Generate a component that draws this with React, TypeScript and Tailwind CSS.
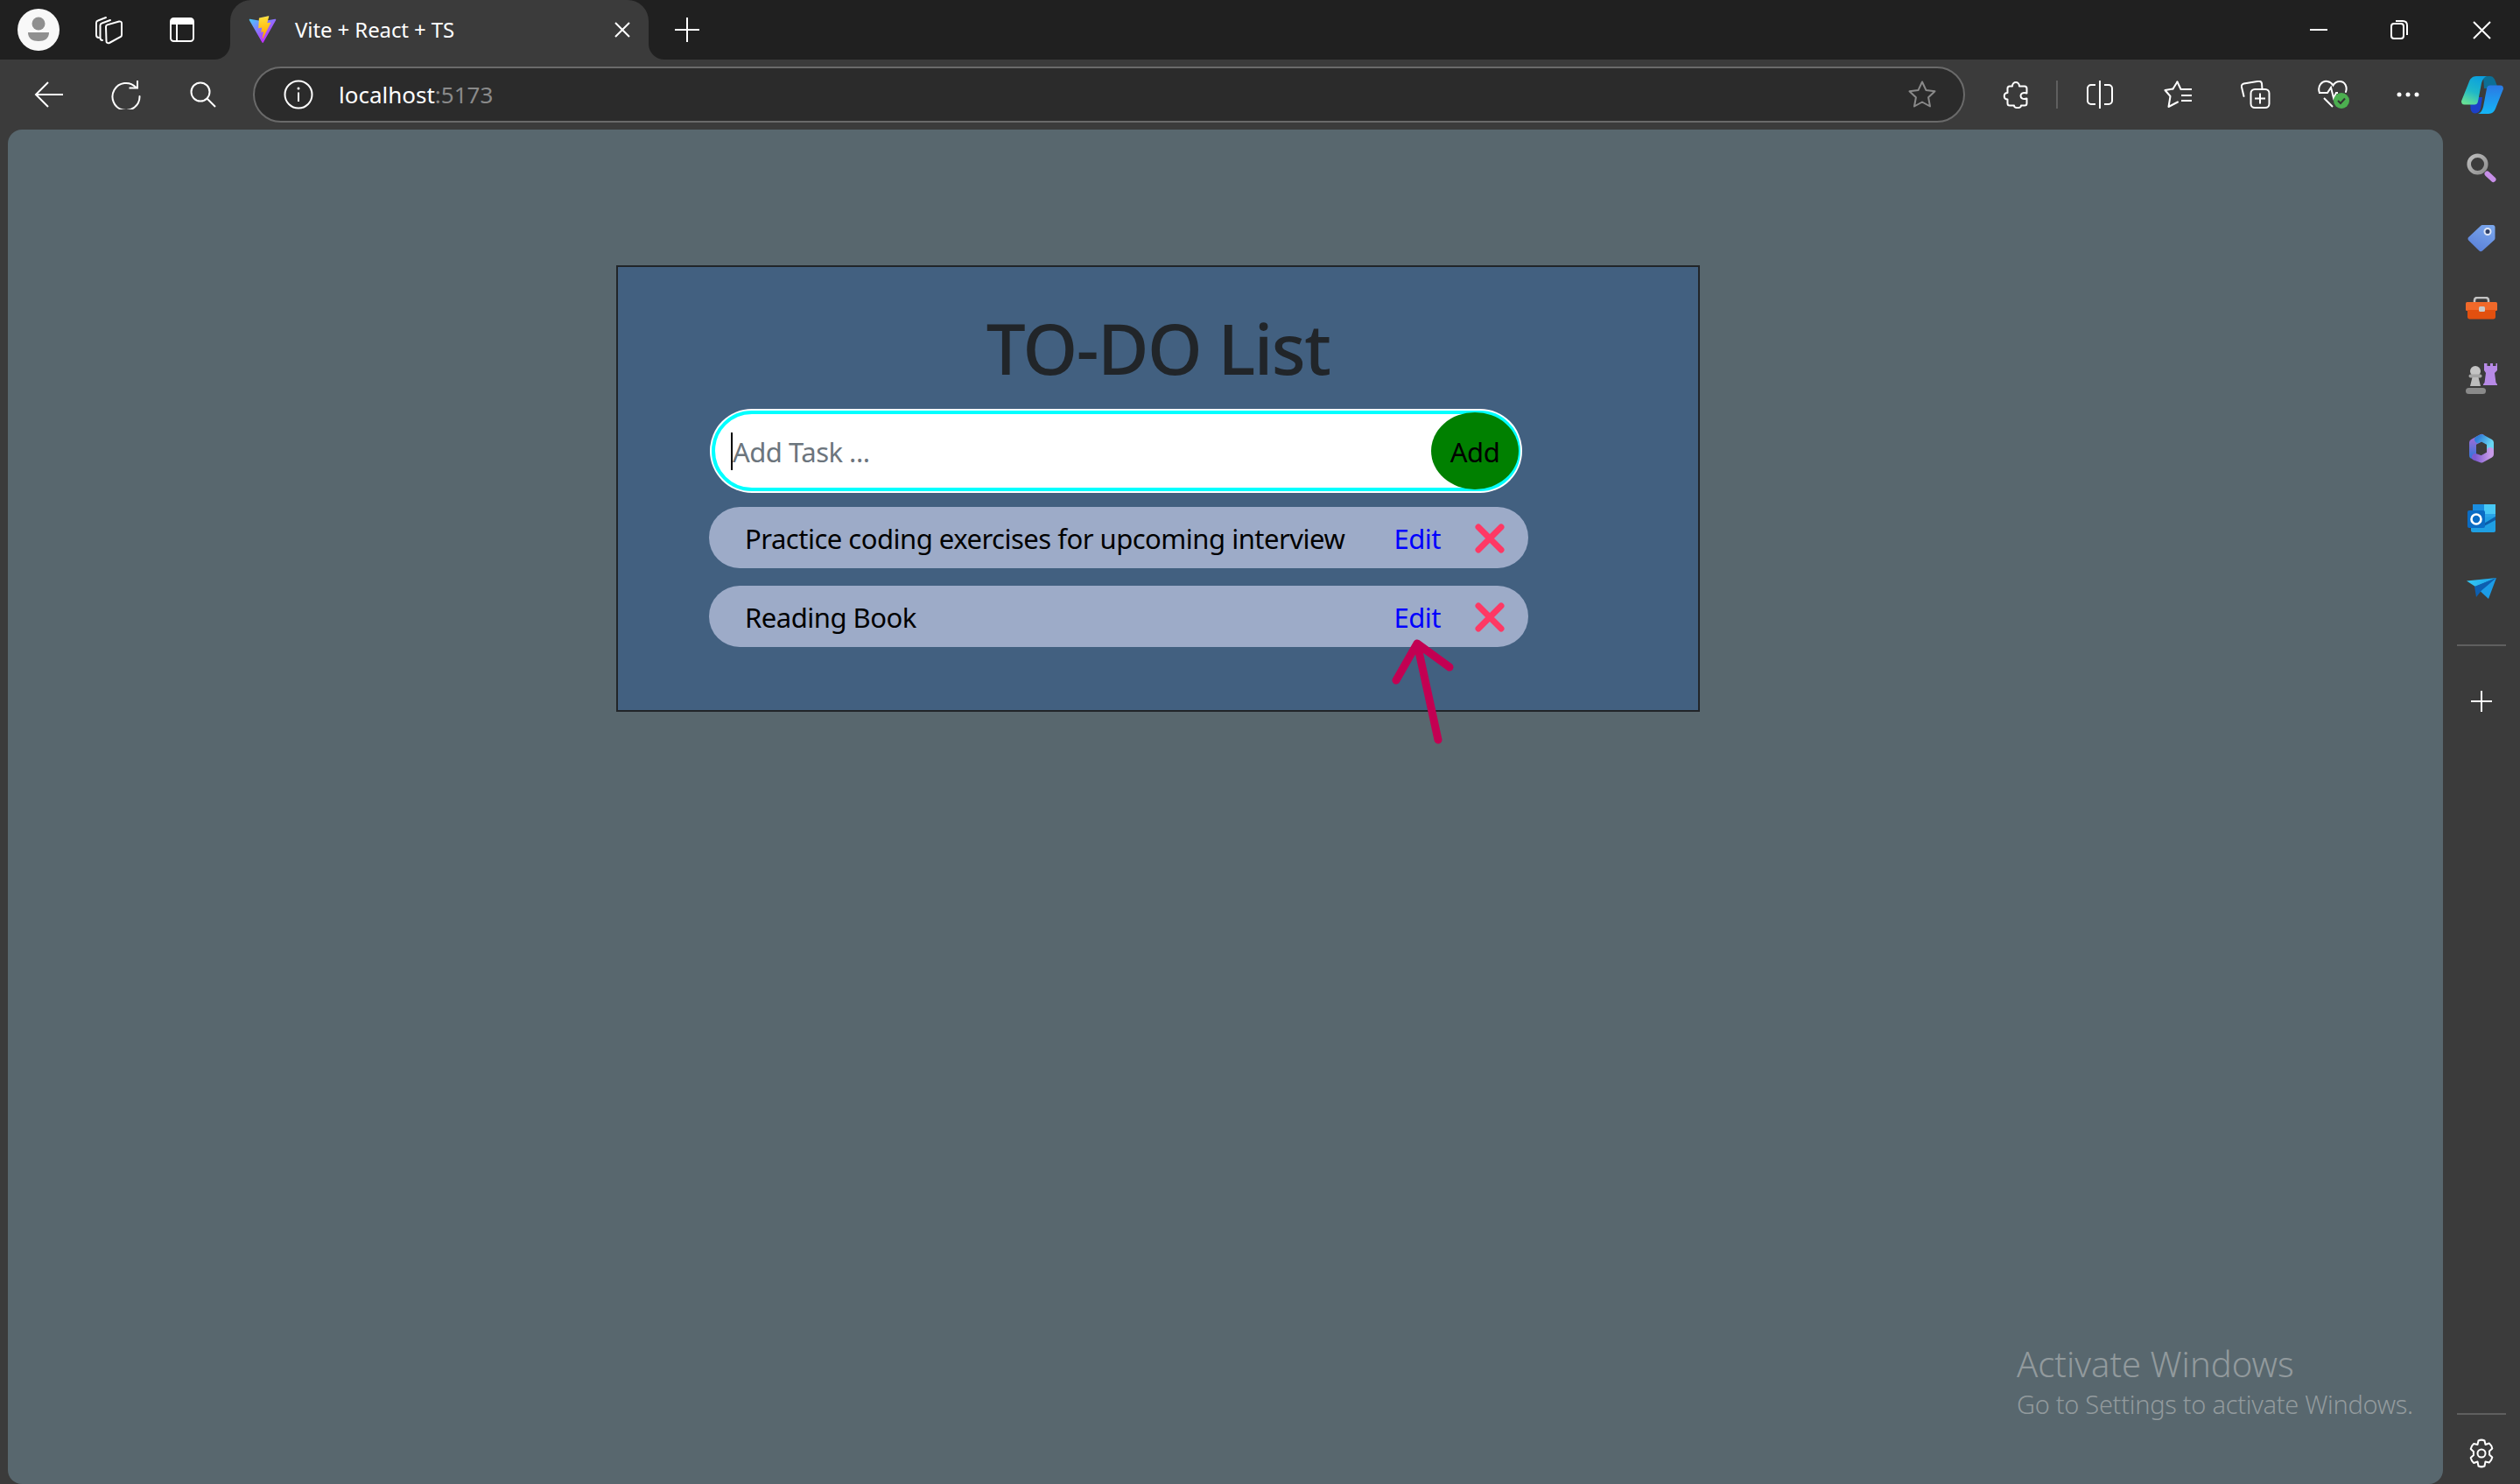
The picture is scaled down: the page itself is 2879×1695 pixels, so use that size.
import React from "react";

const W = "#ffffff";

function Svg({ w, h, children, className = "" }: { w: number; h: number; children: React.ReactNode; className?: string }) {
  return (
    <svg width={w} height={h} viewBox={`0 0 ${w} ${h}`} fill="none" className={"block shrink-0 " + className}>
      {children}
    </svg>
  );
}

function Slot({ w, children }: { w: string; children: React.ReactNode }) {
  return <div className={"flex h-full shrink-0 items-center justify-center " + w}>{children}</div>;
}

const Avatar = () => (
  <Svg w={48} h={48}>
    <circle cx="24" cy="24" r="24" fill="#f8f8f8" />
    <circle cx="24" cy="17" r="7.5" fill="#8f8f8f" />
    <path d="M12 27h24a0 0 0 0 1 0 0c0 7-5 10-12 10s-12-3-12-10z" fill="#8f8f8f" />
  </Svg>
);

const TabsIcon = () => (
  <Svg w={34} h={34}>
    <path d="M6 26c-2 0-3-1-3-3V9c0-1 .5-2 2-2.500L14 3" stroke={W} strokeWidth="2" strokeLinecap="round" />
    <path d="M10 29c-2 0-2.500-1-2.500-3V12c0-1 .5-2 2-2.500L19 6" stroke={W} strokeWidth="2" strokeLinecap="round" />
    <path d="M14 13.500c0-1 .5-1.800 1.500-2.100L29 7.500c1.500-.4 3 .4 3 2V23c0 1-.5 1.800-1.500 2.200L18 32c-2 .6-3.500-.2-3.500-2z" stroke={W} strokeWidth="2" strokeLinejoin="round" />
  </Svg>
);

const VTabsIcon = () => (
  <Svg w={28} h={28}>
    <rect x="1" y="1" width="26" height="26" rx="3.500" stroke={W} strokeWidth="2" />
    <path d="M1 8V4a3 3 0 0 1 3-3h20a3 3 0 0 1 3 3v4z" fill={W} />
    <path d="M8 8v19" stroke={W} strokeWidth="2" />
  </Svg>
);

const ViteIcon = () => (
  <svg width="32" height="32" viewBox="0 0 410 404" fill="none" className="block shrink-0">
    <path d="M399.641 59.5246L215.643 388.545C211.844 395.338 202.084 395.378 198.228 388.618L10.5817 59.5563C6.38087 52.1896 12.6802 43.2665 21.0281 44.7586L205.223 77.6824C206.398 77.8924 207.601 77.8904 208.776 77.6763L389.119 44.8058C397.439 43.2894 403.768 52.1434 399.641 59.5246Z" fill="url(#v0)" />
    <path d="M292.965 1.5744L156.801 28.2552C154.563 28.6937 152.906 30.5903 152.771 32.8664L144.395 174.33C144.198 177.662 147.258 180.248 150.51 179.498L188.42 170.749C191.967 169.931 195.172 173.055 194.443 176.622L183.18 231.775C182.422 235.487 185.907 238.661 189.532 237.56L212.947 230.446C216.577 229.344 220.065 232.527 219.297 236.242L201.398 322.875C200.278 328.294 207.486 331.249 210.492 326.603L212.5 323.5L323.454 102.072C325.312 98.3645 322.108 94.137 318.036 94.9228L279.014 102.454C275.347 103.161 272.227 99.746 273.262 96.1583L298.731 7.86689C299.767 4.27314 296.636 0.855181 292.965 1.5744Z" fill="url(#v1)" />
    <defs>
      <linearGradient id="v0" x1="6" y1="33" x2="235" y2="344" gradientUnits="userSpaceOnUse">
        <stop stopColor="#41D1FF" />
        <stop offset="1" stopColor="#BD34FE" />
      </linearGradient>
      <linearGradient id="v1" x1="194.651" y1="8.818" x2="236.076" y2="292.989" gradientUnits="userSpaceOnUse">
        <stop stopColor="#FFEA83" />
        <stop offset="0.083" stopColor="#FFDD35" />
        <stop offset="1" stopColor="#FFA800" />
      </linearGradient>
    </defs>
  </svg>
);

const XThin = ({ s = 20 }: { s?: number }) => (
  <Svg w={s} h={s}>
    <path d={`M1 1L${s - 1} ${s - 1}M${s - 1} 1L1 ${s - 1}`} stroke={W} strokeWidth="2" />
  </Svg>
);

const Plus = ({ s = 28 }: { s?: number }) => (
  <Svg w={s} h={s}>
    <path d={`M0 ${s / 2}H${s}M${s / 2} 0V${s}`} stroke={W} strokeWidth="2" />
  </Svg>
);

const Back = () => (
  <Svg w={34} h={30}>
    <path d="M33 15H2M16 1L2 15l14 14" stroke={W} strokeWidth="2" />
  </Svg>
);

const Reload = () => (
  <Svg w={34} h={34}>
    <path d="M28 8.500A15.500 15.500 0 1 0 32.500 19" stroke={W} strokeWidth="2" strokeLinecap="round" />
    <path d="M30 1v8.500h-9.500" stroke={W} strokeWidth="2" />
  </Svg>
);

const Search = () => (
  <Svg w={30} h={30}>
    <circle cx="12" cy="12" r="10.500" stroke={W} strokeWidth="2" />
    <path d="M19.500 19.500L29 29" stroke={W} strokeWidth="2" />
  </Svg>
);

const Info = () => (
  <Svg w={34} h={34}>
    <circle cx="17" cy="17" r="15.500" stroke={W} strokeWidth="2" />
    <path d="M17 14.500V25" stroke={W} strokeWidth="2" />
    <circle cx="17" cy="10" r="1.500" fill={W} />
  </Svg>
);

const StarOutline = () => (
  <Svg w={34} h={34}>
    <path d="M17 2.500l4.400 9.400 10.100 1.300-7.400 7.100 1.900 10.200L17 25.500l-9 5 1.900-10.200-7.400-7.100 10.100-1.300z" stroke="#8a8a8a" strokeWidth="2" strokeLinejoin="round" />
  </Svg>
);

const Puzzle = () => (
  <Svg w={30} h={32}>
    <path d="M11 6.500c0-6 8-6 8 0h6c1.500 0 2.500 1 2.500 2.500v5.500c-5-1.500-7 1-7 3s2 4.500 7 3V26c0 1.500-1 2.500-2.500 2.500h-4c0 3.500-8 3.500-8 0H8c-1.500 0-2.500-1-2.500-2.500v-4.500c-5 0-5-7.500 0-7.500V9c0-1.500 1-2.500 2.500-2.500z" stroke={W} strokeWidth="2" strokeLinejoin="round" />
  </Svg>
);

const SplitIcon = () => (
  <Svg w={30} h={32}>
    <path d="M10 5H5a4 4 0 0 0-4 4v14a4 4 0 0 0 4 4h5M20 5h5a4 4 0 0 1 4 4v14a4 4 0 0 1-4 4h-5" stroke={W} strokeWidth="2" />
    <path d="M15 0v32" stroke={W} strokeWidth="2" />
  </Svg>
);

const FavList = () => (
  <Svg w={32} h={32}>
    <path d="M15.500 1.500l4 8.500M10.500 9.500L1.500 11l6 7-2 12 10.500-5.500" stroke={W} strokeWidth="2" strokeLinejoin="round" strokeLinecap="round" />
    <path d="M15.500 1.500l-5 8" stroke={W} strokeWidth="2" strokeLinecap="round" />
    <path d="M20 10h12M20 17h12M20 23h12" stroke={W} strokeWidth="2" />
  </Svg>
);

const Collections = () => (
  <Svg w={34} h={32}>
    <path d="M3.500 18L1 7.500c-.5-2 .5-3.500 2.500-4L20 .8c2-.4 3.500.5 4 2.500L24.500 10" stroke={W} strokeWidth="2" strokeLinecap="round" />
    <rect x="11.500" y="10" width="21" height="21" rx="4.500" stroke={W} strokeWidth="2" />
    <path d="M22 14.500v12M16 20.500h12" stroke={W} strokeWidth="2" />
  </Svg>
);

const Health = () => (
  <Svg w={36} h={34}>
    <path d="M2 15C-1 7 5 1 11 2c3 .5 5 2 6.500 4.500C19 4 21.500 2 25 2c6 0 9 6 7 12" stroke={W} strokeWidth="2" strokeLinecap="round" />
    <path d="M1 15h10l4-6 3 12 3-6h2" stroke={W} strokeWidth="2" />
    <path d="M7 21l10 10" stroke={W} strokeWidth="2" />
    <circle cx="27" cy="24" r="9" fill="#4caf50" />
    <path d="M23 24l3 3 5-5.500" stroke="#333" strokeWidth="2" />
  </Svg>
);

const Dots = () => (
  <Svg w={26} h={6}>
    <circle cx="3" cy="3" r="2.500" fill={W} />
    <circle cx="13" cy="3" r="2.500" fill={W} />
    <circle cx="23" cy="3" r="2.500" fill={W} />
  </Svg>
);

const Copilot = () => (
  <Svg w={48} h={43}>
    <defs>
      <linearGradient id="c0" x1="0.700" y1="0" x2="0.300" y2="1">
        <stop offset="0" stopColor="#0a9fe0" />
        <stop offset="0.550" stopColor="#1fb8c8" />
        <stop offset="1" stopColor="#66e096" />
      </linearGradient>
      <linearGradient id="c1" x1="0.500" y1="0" x2="0.500" y2="1">
        <stop offset="0" stopColor="#2b78e4" />
        <stop offset="1" stopColor="#14b6f6" />
      </linearGradient>
    </defs>
    <path d="M25 0h8c3 0 5 3 6 6l3 8H26z" fill="#0c6f95" />
    <path d="M10 24h14l-2 13c-1 3-3 5.500-6 5.500-3 0-5-2-5.500-5z" fill="#1c40c8" />
    <path d="M9 6c1-3 4-6 8-6h12c-3 1-5 4-6 8l-4 21c-.5 2.500-2 3.500-4 3.500H3.500C1 32.500 0 31 0 28.500z" fill="url(#c0)" />
    <path d="M39 37c-1 3-4 6-8 6H19c3-1 5-4 6-8l4-21c.5-2.500 2-3.500 4-3.500h11.500C47 10.500 48 12 48 14.500z" fill="url(#c1)" />
  </Svg>
);

const SideSearch = () => (
  <Svg w={34} h={34}>
    <defs>
      <linearGradient id="s0" x1="0" y1="0" x2="1" y2="1">
        <stop offset="0" stopColor="#bdbdbd" />
        <stop offset="1" stopColor="#8f8f8f" />
      </linearGradient>
    </defs>
    <circle cx="12.500" cy="12.500" r="9.800" stroke="url(#s0)" strokeWidth="4.500" />
    <path d="M23.500 23.500l7 6.500" stroke="#c78fe8" strokeWidth="6" strokeLinecap="round" />
  </Svg>
);

const Tag = () => (
  <Svg w={32} h={32}>
    <defs>
      <linearGradient id="t0" x1="0.800" y1="0" x2="0.300" y2="1">
        <stop offset="0" stopColor="#7aa6ec" />
        <stop offset="1" stopColor="#5a80d8" />
      </linearGradient>
    </defs>
    <path d="M17 1h12c1.500 0 2.500 1 2.500 2.500V16c0 1-.3 1.700-1 2.300L17 30.500c-1.300 1-2.700 1-3.800-.2L1.200 18.500c-1-1.200-1-2.600.2-3.700L15 2c.6-.6 1.200-1 2-1z" fill="url(#t0)" />
    <circle cx="23" cy="8.500" r="3.500" fill="#2f3f66" stroke="#dfe6f5" strokeWidth="2" />
  </Svg>
);

const Toolbox = () => (
  <Svg w={36} h={26}>
    <path d="M10 9V4c0-2 1-3 3-3h10c2 0 3 1 3 3v5" stroke="#c4c4c4" strokeWidth="2.500" />
    <rect x="0" y="6" width="36" height="10" rx="1.500" fill="#f0692a" />
    <path d="M2 15h32v8c0 1.500-1 2.500-2.500 2.500h-27C3 25.500 2 24.500 2 23z" fill="#e2500f" />
    <rect x="15" y="11" width="7" height="6" rx="1.500" fill="#c9c9c9" />
  </Svg>
);

const Chess = () => (
  <Svg w={36} h={36}>
    <path d="M21 1h3.500v3H28V1h3v3h3.500V1H36l0 8-3 3 1.500 11 1.500 2v1H20v-1l1.500-2L23 12l-2-3z" fill="#b78ae6" />
    <circle cx="11" cy="10" r="6" fill="#c4c4c4" />
    <rect x="3.500" y="13.500" width="15" height="4" rx="2" fill="#a4a4a4" />
    <path d="M7.500 17h7l2.500 10H5z" fill="#bdbdbd" />
    <rect x="0" y="29" width="23" height="7" rx="3.500" fill="#8a8a8a" />
  </Svg>
);

const M365 = () => (
  <Svg w={32} h={34}>
    <defs>
      <linearGradient id="m0" x1="0" y1="0" x2="0" y2="1">
        <stop offset="0" stopColor="#a06cd6" />
        <stop offset="1" stopColor="#3f74d8" />
      </linearGradient>
      <linearGradient id="m1" x1="0" y1="0" x2="1" y2="0.600">
        <stop offset="0" stopColor="#2f7ed8" />
        <stop offset="1" stopColor="#68d6f2" />
      </linearGradient>
      <linearGradient id="m2" x1="0" y1="0" x2="1" y2="0">
        <stop offset="0" stopColor="#7d5ad0" />
        <stop offset="1" stopColor="#c79ae8" />
      </linearGradient>
    </defs>
    <path d="M6 25V10.500L16 5" stroke="url(#m0)" strokeWidth="8" strokeLinejoin="round" strokeLinecap="round" />
    <path d="M12 7l4-2 10 5.500V18" stroke="url(#m1)" strokeWidth="8" strokeLinejoin="round" strokeLinecap="round" />
    <path d="M9 27l7 2.500L26 24v-4" stroke="url(#m2)" strokeWidth="8" strokeLinejoin="round" strokeLinecap="round" />
  </Svg>
);

const Outlook = () => (
  <Svg w={32} h={32}>
    <rect x="6" y="0" width="26" height="22" rx="1.500" fill="#2aa4e8" />
    <rect x="19" y="0" width="13" height="11" fill="#47c8f5" />
    <rect x="6" y="0" width="13" height="11" fill="#1a8ddf" />
    <path d="M4 16l28-2v16c0 1-.7 2-2 2H6c-1 0-2-1-2-2z" fill="#1f9fe3" />
    <path d="M17 23l15-9v4l-15 8z" fill="#0c5da8" />
    <rect x="0" y="7" width="20" height="20" rx="2" fill="#0a6cc4" />
    <circle cx="10" cy="17" r="5.500" stroke={W} strokeWidth="2.600" />
  </Svg>
);

const Send = () => (
  <Svg w={34} h={24}>
    <defs>
      <linearGradient id="p0" x1="0" y1="0" x2="1" y2="0">
        <stop offset="0" stopColor="#35c9f5" />
        <stop offset="1" stopColor="#1aa0e8" />
      </linearGradient>
    </defs>
    <path d="M0 3.500L34 0 10 10z" fill="url(#p0)" />
    <path d="M10 10L34 0 25 24z" fill="#1c9ce6" />
    <path d="M9 10l2 12 6-7.500L34 0z" fill="#0d5fb0" />
  </Svg>
);

const Gear = () => (
  <Svg w={34} h={36}>
    <path d="M13.500 2.500c2-1 5-1 7 0l1 4.500 4.300-1.500c1.700 1.400 3 3.800 3.500 6l-3.300 3c.2 1.600.2 2.400 0 4l3.300 3c-.5 2.200-1.800 4.600-3.500 6L21.500 26.500l-1 5c-2 1-5 1-7 0l-1-5-4.300 1.500c-1.700-1.400-3-3.800-3.500-6l3.300-3c-.2-1.600-.2-2.400 0-4l-3.300-3c.5-2.200 1.800-4.600 3.500-6L12.500 7z" stroke={W} strokeWidth="2" strokeLinejoin="round" transform="translate(0 1)" />
    <circle cx="17" cy="18" r="4.500" stroke={W} strokeWidth="2" />
  </Svg>
);

const Cross = () => (
  <Svg w={34} h={34}>
    <path d="M4 4l26 26M30 4L4 30" stroke="#ff3864" strokeWidth="7" strokeLinecap="round" />
  </Svg>
);

function TaskRow({ text }: { text: string }) {
  return (
    <div className="flex h-[70px] w-[936px] items-center rounded-[35px] bg-[#9dabc8] pl-[41px] pr-[27px]">
      <span className="mt-[2px] flex-1 text-[31px] tracking-[-0.5px] text-black">{text}</span>
      <span className="mt-[2px] text-[31px] tracking-[-0.5px] text-[#0000ff]">Edit</span>
      <span className="ml-[39px] mt-[2px]">
        <Cross />
      </span>
    </div>
  );
}

export default function App() {
  return (
    <div className="flex h-[1695px] w-[2879px] flex-col overflow-hidden bg-[#3b3b3b] font-['Noto_Sans',sans-serif]">
      {/* Tab strip */}
      <div className="flex h-[68px] shrink-0">
        <div className="flex w-[263px] items-center rounded-br-[18px] bg-[#202020] pl-[20px]">
          <Avatar />
          <div className="ml-[39px]">
            <TabsIcon />
          </div>
          <div className="ml-[53px]">
            <VTabsIcon />
          </div>
        </div>
        <div className="w-[478px] bg-[#202020]">
          <div className="flex h-full items-center rounded-t-[24px] bg-[#3b3b3b] pl-[21px] pr-[21px]">
            <ViteIcon />
            <span className="ml-[21px] flex-1 text-[24px] tracking-[-0.1px] text-white">Vite + React + TS</span>
            <XThin s={18} />
          </div>
        </div>
        <div className="flex flex-1 items-center rounded-bl-[18px] bg-[#202020] pl-[30px]">
          <Plus />
          <div className="flex-1" />
          <Slot w="w-[92px]">
            <div className="h-[2px] w-[20px] bg-white" />
          </Slot>
          <Slot w="w-[92px] mr-[4px]">
            <Svg w={20} h={22}>
              <rect x="1" y="4" width="14" height="17" rx="3" stroke={W} strokeWidth="2" />
              <path d="M6 1h8c3 0 5 2 5 5v11" stroke={W} strokeWidth="2" />
            </Svg>
          </Slot>
          <Slot w="w-[88px]">
            <XThin s={21} />
          </Slot>
        </div>
      </div>

      {/* Toolbar */}
      <div className="flex h-[80px] shrink-0 items-center pl-[12px]">
        <Slot w="w-[88px]">
          <Back />
        </Slot>
        <Slot w="w-[88px]">
          <Reload />
        </Slot>
        <Slot w="w-[88px]">
          <Search />
        </Slot>
        <div className="ml-[13px] flex h-[64px] w-[1956px] items-center rounded-[32px] border-2 border-[#6a6a6a] bg-[#2b2b2b] pl-[33px] pr-[30px]">
          <Info />
          <span className="ml-[29px] flex-1 text-[26px] tracking-[0px] text-white">
            localhost<span className="text-[#8a8a8a]">:5173</span>
          </span>
          <StarOutline />
        </div>
        <div className="ml-[14px] flex h-full items-center">
          <Slot w="w-[88px]">
            <Puzzle />
          </Slot>
          <div className="ml-[2px] h-[32px] w-[2px] bg-[#5f5f5f]" />
          <Slot w="w-[96px]">
            <SplitIcon />
          </Slot>
          <Slot w="w-[82px]">
            <FavList />
          </Slot>
          <Slot w="w-[96px]">
            <Collections />
          </Slot>
          <Slot w="w-[82px]">
            <Health />
          </Slot>
          <Slot w="w-[88px]">
            <Dots />
          </Slot>
          <Slot w="w-[82px]">
            <Copilot />
          </Slot>
        </div>
      </div>

      {/* Body */}
      <div className="flex min-h-0 flex-1">
        <main className="relative ml-[9px] flex-1 rounded-[16px] bg-[#58676e] pl-[695px] pt-[155px]">
          <section className="flex h-[510px] w-[1238px] flex-col border-2 border-[#212529] bg-[#426080] pl-[105px]">
            <h1 className="-ml-[105px] flex h-[162px] items-center justify-center pt-[21px] text-[80px] font-medium tracking-[-1.5px] text-[#212529]">
              TO-DO List
            </h1>
            <div className="h-[96px] w-[928px] rounded-[48px] bg-white p-[2px]">
              <div className="flex h-full items-center rounded-[46px] border-4 border-[#00ffff] bg-white pl-[18px]">
                <span className="h-[43px] w-[2px] shrink-0 bg-black" />
                <input
                  readOnly
                  placeholder="Add Task ..."
                  className="mt-[2px] min-w-0 flex-1 bg-transparent text-[31px] tracking-[-0.5px] outline-none placeholder:text-[#6c757d]"
                />
                <button className="-mr-[2px] h-[88px] w-[100px] shrink-0 rounded-[50%] bg-[#008000] pt-[2px] text-[31px] tracking-[-0.5px] text-black">
                  Add
                </button>
              </div>
            </div>
            <div className="mt-[16px] flex flex-col gap-[20px] -ml-[1px]">
              <TaskRow text="Practice coding exercises for upcoming interview" />
              <TaskRow text="Reading Book" />
            </div>
          </section>

          {/* Hand-drawn annotation arrow */}
          <svg width="80" height="130" viewBox="0 0 80 130" fill="none" className="absolute left-[1580px] top-[582px]">
            <path d="M54 115L30 5M6 47L30 5L67 32" stroke="#c30052" strokeWidth="9" strokeLinecap="round" strokeLinejoin="round" />
          </svg>

          {/* Windows watermark */}
          <div className="absolute left-[2295px] top-[1384px] font-light text-[#929a9d]">
            <div className="text-[40px] leading-[52px]">Activate Windows</div>
            <div className="text-[29px] leading-[39px] tracking-[-0.3px]">Go to Settings to activate Windows.</div>
          </div>
        </main>

        {/* Sidebar */}
        <aside className="flex w-[88px] shrink-0 flex-col items-center pt-[4px]">
          <div className="flex h-[80px] items-center">
            <SideSearch />
          </div>
          <div className="flex h-[80px] items-center">
            <Tag />
          </div>
          <div className="flex h-[80px] items-center">
            <Toolbox />
          </div>
          <div className="flex h-[80px] items-center">
            <Chess />
          </div>
          <div className="flex h-[80px] items-center">
            <M365 />
          </div>
          <div className="flex h-[80px] items-center">
            <Outlook />
          </div>
          <div className="flex h-[80px] items-center">
            <Send />
          </div>
          <div className="mt-[24px] h-[2px] w-[56px] bg-[#5f5f5f]" />
          <div className="mt-[51px]">
            <Plus s={24} />
          </div>
          <div className="flex-1" />
          <div className="h-[2px] w-[56px] bg-[#5f5f5f]" />
          <div className="mb-[17px] mt-[26px]">
            <Gear />
          </div>
        </aside>
      </div>
    </div>
  );
}
